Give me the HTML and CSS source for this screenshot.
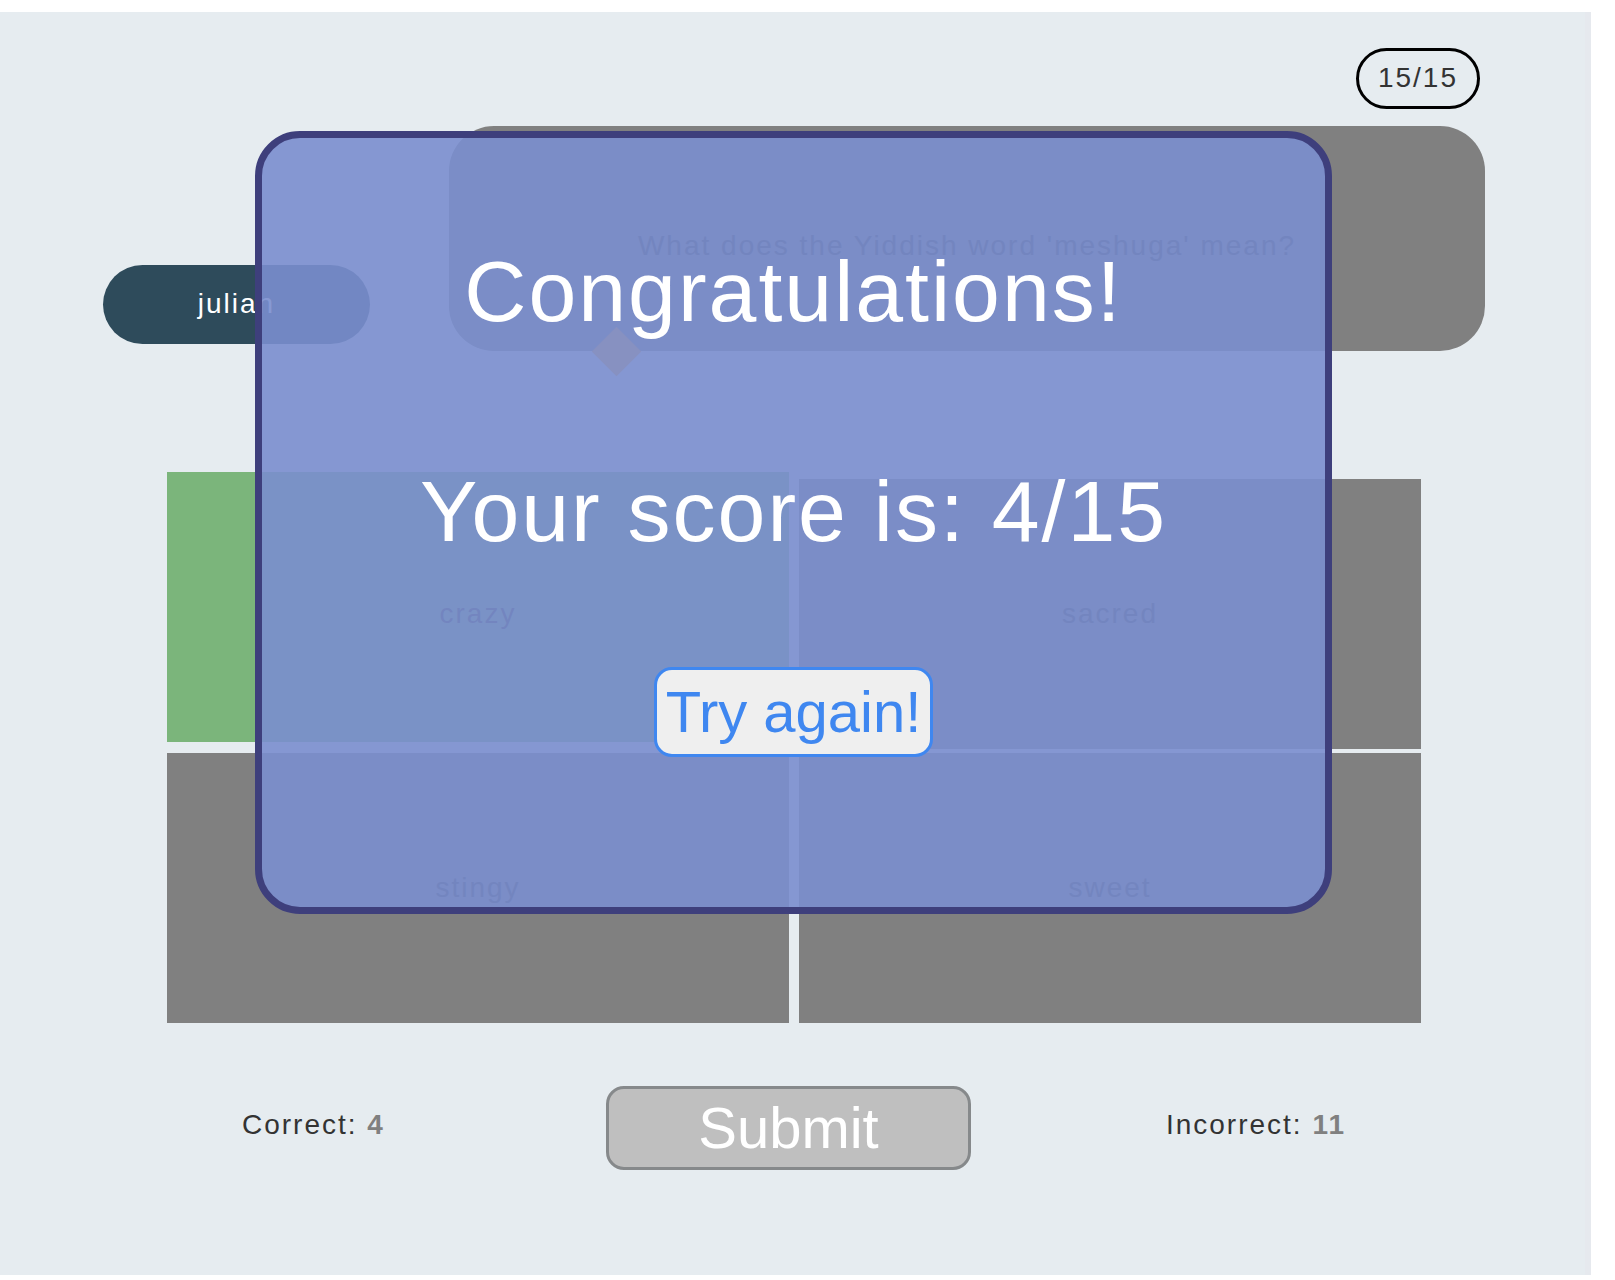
FILE: index.html
```html
<!DOCTYPE html>
<html lang="en">
<head>
  <meta charset="utf-8">
  <meta name="viewport" content="width=device-width, initial-scale=1">
  <title>Quiz</title>
  <link rel="stylesheet" href="styles.css">
</head>
<body>
  <main class="quiz">
    <div class="progress">15/15</div>
    <section class="prompt">
      <div class="player">julian</div>
      <p class="question">What does the Yiddish word 'meshuga' mean?</p>
    </section>
    <section class="answers">
      <button type="button" class="answer answer-correct">crazy</button>
      <button type="button" class="answer">sacred</button>
      <button type="button" class="answer">stingy</button>
      <button type="button" class="answer">sweet</button>
    </section>
    <footer class="results">
      <p class="count">Correct: <strong>4</strong></p>
      <button type="button" class="submit">Submit</button>
      <p class="count count-wrong">Incorrect: <strong>11</strong></p>
    </footer>
    <div class="modal" role="dialog" aria-labelledby="modal-title">
      <h1 class="headline" id="modal-title">Congratulations!</h1>
      <p class="headline">Your score is: 4/15</p>
      <button type="button" class="again">Try again!</button>
    </div>
  </main>
</body>
</html>
```

FILE: styles.css
```css
* {
  box-sizing: border-box;
}

body {
  margin: 12px 24px 0 0;
  background: #fff;
  color: #333;
  font-family: "Liberation Sans", Arial, sans-serif;
  font-size: 28px;
  line-height: 34px;
  letter-spacing: 2px;
}

h1,
p {
  margin: 0;
}

button {
  font: inherit;
  letter-spacing: inherit;
  cursor: pointer;
}

.quiz {
  position: relative;
  display: flex;
  flex-direction: column;
  padding: 36px 0 105px;
  border-right: 6px solid #e6e9ee;
  background: #e6ecf0;
}

.progress {
  align-self: flex-end;
  margin-right: 105px;
  padding: 10px 19px 11px;
  border: 3px solid #000;
  border-radius: 31px;
}

.prompt {
  display: flex;
  align-items: flex-end;
  gap: 79px;
  margin: 17px 100px 0 103px;
}

.player {
  flex: 0 0 267px;
  margin-bottom: 7px;
  padding: 22px 0 23px;
  border-radius: 40px;
  background: #2e4b5b;
  color: #fff;
  text-align: center;
}

.question {
  position: relative;
  display: flex;
  flex: 1;
  align-items: center;
  justify-content: center;
  min-height: 225px;
  padding-top: 14px;
  border-radius: 45px;
  background: #808080;
  text-align: center;
}

.question::after {
  content: "";
  position: absolute;
  bottom: -18px;
  left: 150px;
  width: 35px;
  height: 35px;
  background: #f8a848;
  transform: rotate(45deg);
}

.answers {
  display: grid;
  grid-template-columns: 1fr 1fr;
  gap: 4px 10px;
  margin: 128px 164px 0 167px;
}

.answer {
  height: 270px;
  padding: 0;
  border: 0;
  background: #808080;
  color: #333;
}

.answer-correct {
  margin-top: -7px;
  padding-top: 14px;
  background: #7bb57b;
}

.results {
  display: grid;
  grid-template-columns: 33fr 33fr 34fr;
  align-items: center;
  margin: 63px 239px 0 242px;
}

.count {
  padding-bottom: 6px;
}

.count strong {
  color: #808080;
}

.count-wrong {
  justify-self: end;
}

.submit,
.again {
  border-style: solid;
  border-width: 3px;
  border-radius: 18px;
  font-size: 58px;
  letter-spacing: normal;
}

.submit {
  padding: 6px 0;
  border-color: #86898b;
  background: #bfbfbf;
  color: #fff;
  line-height: 66px;
}

.again {
  margin-top: -16px;
  padding: 9px;
  border-color: #3f87f0;
  background: #efefef;
  color: #3f87f0;
  line-height: 66px;
}

.modal {
  position: absolute;
  top: 119px;
  right: 253px;
  left: 255px;
  display: flex;
  flex-direction: column;
  align-items: center;
  gap: 124px;
  padding: 105px 0 150px;
  border: 7px solid #3e3f7c;
  border-radius: 45px;
  background: rgba(122, 142, 206, 0.9);
}

.headline {
  color: #fff;
  font-size: 86px;
  font-weight: 400;
  line-height: 96px;
}
```
